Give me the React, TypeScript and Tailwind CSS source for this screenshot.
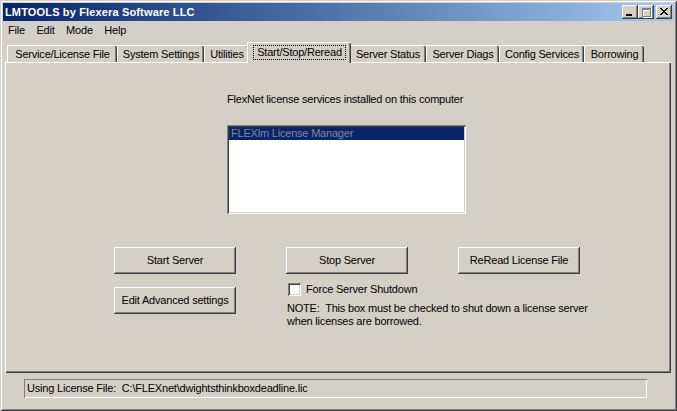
import React from "react";

const raised =
  "shadow-[inset_-1px_-1px_#404040,inset_1px_1px_#ffffff,inset_-2px_-2px_#808080,inset_2px_2px_#d4d0c8]";
const sunken =
  "shadow-[inset_1px_1px_#808080,inset_-1px_-1px_#ffffff,inset_2px_2px_#404040,inset_-2px_-2px_#d4d0c8]";

const tabs = [
  { label: "Service/License File", w: "w-[110px]" },
  { label: "System Settings", w: "w-[87px]" },
  { label: "Utilities", w: "w-[45px]" },
  { label: "Start/Stop/Reread", w: "w-[104px]", active: true },
  { label: "Server Status", w: "w-[77px]" },
  { label: "Server Diags", w: "w-[73px]" },
  { label: "Config Services", w: "w-[85px]" },
  { label: "Borrowing", w: "w-[60px]" },
];

// pixel pattern of the classic close glyph
const closeRects: [number, number, number][] = [
  [0, 0, 2], [6, 0, 2],
  [1, 1, 2], [5, 1, 2],
  [2, 2, 4],
  [3, 3, 2],
  [2, 4, 4],
  [1, 5, 2], [5, 5, 2],
  [0, 6, 2], [6, 6, 2],
];

function CaptionButton({ kind }: { kind: "min" | "max" | "close" }) {
  return (
    <div className={`w-[16px] h-[14px] bg-[#d4d0c8] ${raised}`}>
      <svg width="16" height="14" viewBox="0 0 16 14" shapeRendering="crispEdges">
        {kind === "min" && <rect x="4" y="9" width="6" height="2" fill="#000" />}
        {kind === "max" && (
          <>
            <path d="M5 4h9v9h-9z M6 6h7v6h-7z" fill="#ffffff" fillRule="evenodd" />
            <path d="M4 3h9v9h-9z M5 5h7v6h-7z" fill="#808080" fillRule="evenodd" />
          </>
        )}
        {kind === "close" &&
          closeRects.map(([x, y, w], i) => (
            <rect key={i} x={4 + x} y={3 + y} width={w} height="1" fill="#000" />
          ))}
      </svg>
    </div>
  );
}

function Button({ children }: { children: React.ReactNode }) {
  return (
    <div className={`w-[122px] h-[27px] bg-[#d4d0c8] flex items-center justify-center leading-[13px] ${raised}`}>
      {children}
    </div>
  );
}

export default function App() {
  return (
    <div
      className={`w-[677px] h-[411px] bg-[#d4d0c8] p-[3px] flex flex-col text-black text-[11px] tracking-[-0.2px] font-['Liberation_Sans',Arial,sans-serif] shadow-[inset_1px_1px_#d4d0c8,inset_-1px_-1px_#404040,inset_2px_2px_#ffffff,inset_-2px_-2px_#808080]`}
    >
      {/* title bar */}
      <div className="h-[18px] flex items-center justify-between bg-linear-to-r from-[#0a246a] to-[#a6caf0] pl-[2px] pr-[2px]">
        <span className="text-white font-bold tracking-[0.15px] leading-[13px]">
          LMTOOLS by Flexera Software LLC
        </span>
        <div className="flex items-center">
          <CaptionButton kind="min" />
          <CaptionButton kind="max" />
          <div className="ml-[2px]">
            <CaptionButton kind="close" />
          </div>
        </div>
      </div>

      {/* menu */}
      <div className="h-[19px] flex items-center pl-[5px] gap-[11.5px] leading-[13px]">
        <span>File</span>
        <span>Edit</span>
        <span>Mode</span>
        <span>Help</span>
      </div>

      {/* tabs */}
      <div className="h-[22px] flex items-start pl-[4px]">
        {tabs.map((t) =>
          t.active ? (
            <div
              key={t.label}
              className={`relative z-10 -mx-[2px] mt-[2px] h-[21px] ${t.w} bg-[#d4d0c8] border-l border-t border-white rounded-t-[2px] shadow-[inset_-1px_0_#404040,inset_-2px_0_#808080] flex items-start justify-center pt-[2px]`}
            >
              <span className="border border-dotted border-black px-[3px] leading-[13px]">{t.label}</span>
            </div>
          ) : (
            <div
              key={t.label}
              className={`mt-[5px] h-[17px] ${t.w} border-l border-t border-white rounded-t-[2px] shadow-[inset_-1px_0_#404040,inset_-2px_0_#808080] flex items-center justify-center leading-[13px]`}
            >
              {t.label}
            </div>
          )
        )}
      </div>

      {/* tab panel */}
      <div className="ml-[2px] mr-[3px] h-[311px] border-l border-t border-white shadow-[inset_-1px_-1px_#404040,inset_-2px_-2px_#808080] flex flex-col">
        <div className="ml-[221px] mt-[30px] w-[239px]">
          <div className="leading-[13px] whitespace-nowrap">
            FlexNet license services installed on this computer
          </div>
          <div className={`mt-[19px] h-[89px] bg-white p-[2px] ${sunken}`}>
            <div className="h-[13px] bg-[#0a246a] text-[#7f8799] pl-[2px] leading-[13px]">
              FLEXlm License Manager
            </div>
          </div>
        </div>

        <div className="ml-[108px] mt-[33px] flex gap-[50px]">
          <div className="flex flex-col gap-[13px]">
            <Button>Start Server</Button>
            <Button>Edit Advanced settings</Button>
          </div>
          <div className="flex flex-col w-[122px]">
            <Button>Stop Server</Button>
            <div className="mt-[9px] ml-[2px] flex items-center whitespace-nowrap">
              <div className={`w-[13px] h-[13px] shrink-0 bg-white ${sunken}`} />
              <span className="ml-[5px] leading-[13px]">Force Server Shutdown</span>
            </div>
            <div className="mt-[6px] ml-[1px] leading-[13px] whitespace-pre">
              {"NOTE:  This box must be checked to shut down a license server\nwhen licenses are borrowed."}
            </div>
          </div>
          <div>
            <Button>ReRead License File</Button>
          </div>
        </div>
      </div>

      {/* status */}
      <div className="mt-[6px] ml-[21px] w-[623px] h-[19px] shadow-[inset_1px_1px_#808080,inset_-1px_-1px_#ffffff] flex items-center pl-[3px] leading-[13px] whitespace-pre">
        {"Using License File:  C:\\FLEXnet\\dwightsthinkboxdeadline.lic"}
      </div>
    </div>
  );
}
